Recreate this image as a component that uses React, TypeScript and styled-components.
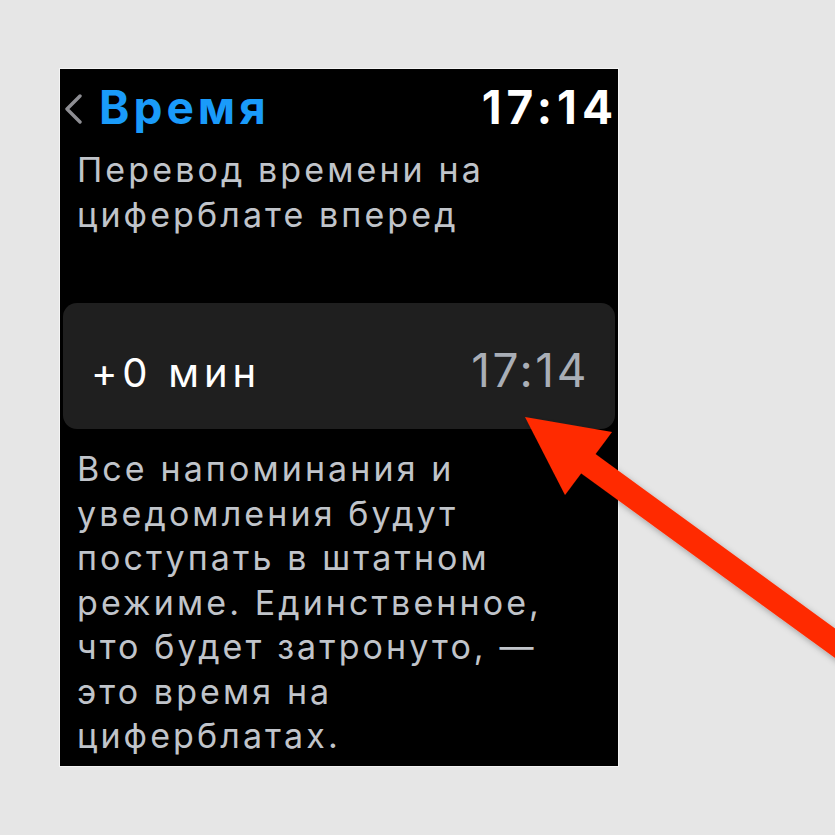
import React from "react";
import styled, { createGlobalStyle } from "styled-components";

const GlobalStyle = createGlobalStyle`
  body {
    margin: 0;
    background: #e6e6e6;
  }
`;

const Page = styled.div`
  position: relative;
  width: 835px;
  height: 835px;
  box-sizing: border-box;
  padding: 69px 0 0 60px;
  background: #e6e6e6;
  overflow: hidden;
`;

const Watch = styled.div`
  width: 558px;
  height: 697px;
  box-sizing: border-box;
  padding: 0 3px;
  background: #000;
  outline: 1px solid #f4f4f4;
  overflow: hidden;
  font-family: Inter, "Noto Sans", sans-serif;
`;

const Header = styled.div`
  display: flex;
  align-items: baseline;
  justify-content: space-between;
  height: 56px;
  margin: 10px -3px 0 0;
  padding-left: 2px;
`;

const Back = styled.div`
  display: flex;
  align-items: baseline;
  gap: 16px;
`;

const Title = styled.span`
  font-size: 46px;
  line-height: 56px;
  font-weight: 700;
  letter-spacing: 4px;
  color: #1a9bfa;
`;

const Clock = styled.span`
  font-size: 46px;
  line-height: 56px;
  font-weight: 700;
  letter-spacing: 5px;
  color: #fff;
`;

const Text = styled.p<{ $top: number }>`
  margin: ${({ $top }) => $top}px 0 0;
  padding-left: 14px;
  font-size: 34px;
  line-height: 44.5px;
  letter-spacing: 3.1px;
  color: #c0c4ca;
`;

const Row = styled.div`
  display: flex;
  align-items: baseline;
  justify-content: space-between;
  height: 126px;
  box-sizing: border-box;
  margin-top: 66px;
  padding: 44px 26px 0 28px;
  border-radius: 14px;
  background: #1f1f1f;
`;

const Label = styled.span`
  font-size: 40px;
  line-height: 40px;
  letter-spacing: 4.8px;
  color: #fff;
`;

const Value = styled.span`
  font-size: 46px;
  line-height: 46px;
  letter-spacing: 2.6px;
  color: #a9aeb6;
`;

const Overlay = styled.svg`
  position: absolute;
  inset: 0;
  pointer-events: none;
`;

const Chevron = () => (
  <svg width="18" height="30" viewBox="0 0 18 30">
    <polyline
      points="15,2 2,15 15,28"
      fill="none"
      stroke="#8e8e93"
      strokeWidth="3.4"
      strokeLinecap="round"
      strokeLinejoin="round"
    />
  </svg>
);

export default function App() {
  return (
    <>
      <GlobalStyle />
      <Page>
        <Watch>
          <Header>
            <Back>
              <Chevron />
              <Title>Время</Title>
            </Back>
            <Clock>17:14</Clock>
          </Header>
          <Text $top={13}>
            Перевод времени на
            <br />
            циферблате вперед
          </Text>
          <Row>
            <Label>+0 мин</Label>
            <Value>17:14</Value>
          </Row>
          <Text $top={18}>
            Все напоминания и<br />
            уведомления будут
            <br />
            поступать в штатном
            <br />
            режиме. Единственное,
            <br />
            что будет затронуто, —
            <br />
            это время на
            <br />
            циферблатах.
          </Text>
        </Watch>
        <Overlay width="835" height="835" viewBox="0 0 835 835">
          <defs>
            <filter id="arrowShadow" x="-20%" y="-20%" width="140%" height="140%">
              <feDropShadow dx="2" dy="3" stdDeviation="3" floodColor="#000" floodOpacity="0.3" />
            </filter>
          </defs>
          <g filter="url(#arrowShadow)" fill="#ff2b06">
            <line x1="575" y1="454" x2="920" y2="705" stroke="#ff2b06" strokeWidth="24" />
            <polygon points="525,417 612,432 565,495" />
          </g>
        </Overlay>
      </Page>
    </>
  );
}
